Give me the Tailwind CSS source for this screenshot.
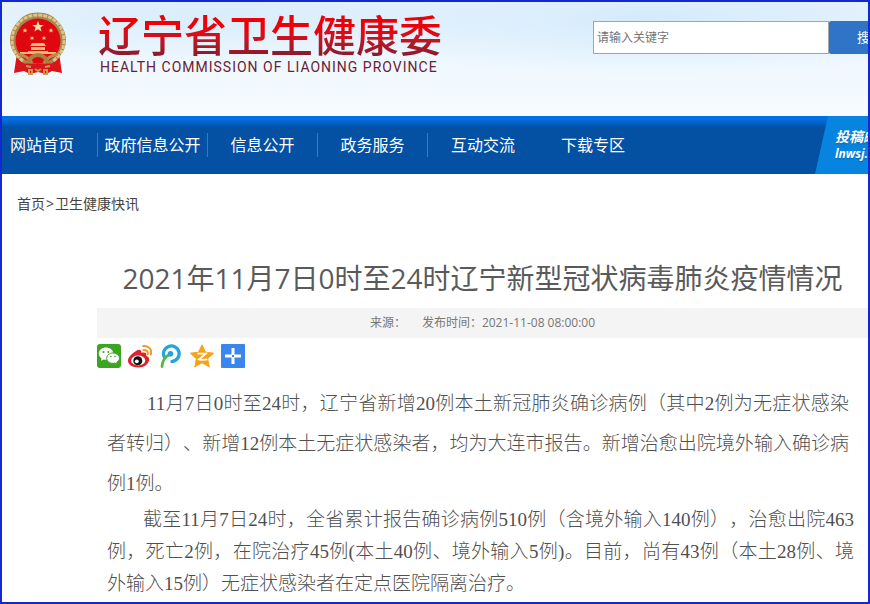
<!DOCTYPE html>
<html lang="zh-CN">
<head>
  <meta charset="UTF-8" />
  <meta name="viewport" content="width=device-width, initial-scale=1.0" />
  <title>辽宁省卫生健康委</title>
  <script src="https://cdn.jsdelivr.net/npm/@tailwindcss/browser@4"></script>
</head>

<body class="min-h-screen overflow-x-hidden border-2 border-[#1428d0] bg-white font-['Open_Sans','Noto_Sans_CJK_SC',sans-serif] text-[#444]">

  <!-- Header -->
  <header class="flex h-[114px] items-start overflow-hidden bg-[#eef7fe] bg-[radial-gradient(ellipse_at_25%_10%,#d8edfc,transparent_35%),radial-gradient(ellipse_at_75%_15%,#d4ebfc,transparent_40%),linear-gradient(#e8f4fd,#f6fbff)]">
    <a href="#" class="flex shrink-0 items-start pt-[10px] pl-[7px]" aria-label="辽宁省卫生健康委">
      <svg class="h-[63px] w-[58px]" viewBox="0 0 58 63">
        <path d="M8 41L5 61l10-2 6 3 8-2 8 2 6-3 10 2-3-20z" fill="#d9141b"/>
        <path d="M29 .5c9 0 15 3 20 9 5 5 8 12 8 19 0 9-6 17-14 23H15C7 45.500 1 37.500 1 28.500c0-7 3-14 8-19C14 3.500 20 .5 29 .5z" fill="#a8854a"/>
        <path d="M14 49C7 44 3 37 3 29 3 14 14 3 29 3s26 11 26 26c0 8-4 15-11 20" fill="none" stroke="#d9c48c" stroke-width="3" stroke-dasharray="4 1"/>
        <circle cx="29" cy="29" r="22.500" fill="#e00810"/>
        <path d="M29 9l1.500 4h4.200l-3.300 2.600 1.200 4-3.600-2.400-3.600 2.400 1.200-4-3.300-2.600h4.200z" fill="#f3e3ac"/>
        <path d="M16 16l.8 1.700h1.800l-1.500 1.100.6 1.800-1.700-1.100-1.700 1.100.6-1.800-1.500-1.100h1.800zM42 16l.8 1.700h1.800l-1.500 1.100.6 1.800-1.700-1.100-1.700 1.100.6-1.800-1.500-1.100h1.800zM23 24l.8 1.500h1.600l-1.300 1 .5 1.600-1.600-1-1.600 1 .5-1.600-1.300-1h1.600zM35 24l.8 1.500h1.600l-1.300 1 .5 1.600-1.600-1-1.600 1 .5-1.600-1.300-1h1.600z" fill="#e8cd85"/>
        <path d="M23 31h12l2 3H21zM22 35h14v3H22zM19 39h20v2H19zM11 40h36v2H11z" fill="#e0bf79"/>
        <path d="M9 42q10 2 14 9M49 42q-10 2-14 9" fill="none" stroke="#b98c48" stroke-width="3"/>
        <path d="M20 51a9 8 0 0 1 18 0" fill="none" stroke="#a8803f" stroke-width="4"/>
        <path d="M17 54l5 1M36 55l5-1M20 58h3v4h-3zM35 58h3v4h-3zM26 57l3 2 3-2" fill="none" stroke="#c79a50" stroke-width="2"/>
      </svg>
      <span class="ml-[31px] block">
        <span class="block bg-linear-to-b from-[#ee0008] from-35% to-[#8b1a2b] to-90% bg-clip-text text-[43px] leading-[48px] font-medium whitespace-nowrap text-transparent">辽宁省卫生健康委</span>
        <span class="ml-[2px] block font-['Roboto',sans-serif] text-[14px] leading-[14px] tracking-[1px] whitespace-nowrap text-[#6b2030]">HEALTH COMMISSION OF LIAONING PROVINCE</span>
      </span>
    </a>

    <form class="mt-[19px] ml-auto flex h-[33px] w-[275px] overflow-hidden">
      <input type="text" aria-label="关键字" placeholder="请输入关键字" class="w-[236px] shrink-0 border border-[#a0a6ac] bg-white px-[3px] text-[12px] placeholder:text-[#757575]" />
      <button type="button" class="shrink-0 rounded-xs bg-[#2f74c5] px-7 text-[13px] whitespace-nowrap text-white">搜索</button>
    </form>
  </header>

  <!-- Main menu -->
  <nav class="flex h-[58px] overflow-hidden bg-linear-to-b from-[#0070e6] from-5% via-[#0450a3] via-20% to-[#0450a3] text-[16px] text-white">
    <ul class="flex items-center whitespace-nowrap">
      <li class="flex h-6 w-24 shrink-0 items-center border-r border-[#2c7ae0] pl-2"><a href="#">网站首页</a></li>
      <li class="flex h-6 w-[110px] shrink-0 items-center justify-center border-r border-[#2c7ae0]"><a href="#">政府信息公开</a></li>
      <li class="flex h-6 w-[110px] shrink-0 items-center justify-center border-r border-[#2c7ae0]"><a href="#">信息公开</a></li>
      <li class="flex h-6 w-[110px] shrink-0 items-center justify-center border-r border-[#2c7ae0]"><a href="#">政务服务</a></li>
      <li class="flex h-6 w-[110px] shrink-0 items-center justify-center"><a href="#">互动交流</a></li>
      <li class="flex h-6 w-[110px] shrink-0 items-center justify-center"><a href="#">下载专区</a></li>
    </ul>
    <a href="#" class="ml-auto block w-[53px] overflow-hidden bg-[#0784e0] pt-3 pl-5 text-[14px] leading-[17px] font-bold whitespace-nowrap italic [clip-path:polygon(13px_0,100%_0,100%_100%,0_100%)] text-shadow-sm">
      <span class="block">投稿邮箱</span>
      <span class="block text-[12px]">lnwsj.</span>
    </a>
  </nav>

  <main>
    <p class="mt-[19px] ml-[15px] text-[14px] leading-[22px]"><a href="#">首页</a><span class="px-px">&gt;</span><a href="#">卫生健康快讯</a></p>

    <article class="ml-[95px]">
      <h1 class="mt-[43px] text-center text-[28px] leading-[40px] text-[#5a5a5a]">2021年11月7日0时至24时辽宁新型冠状病毒肺炎疫情情况</h1>

      <div class="mt-[10px] flex h-[30px] items-center justify-center gap-4 bg-[#f4f4f4] text-[12px] text-[#777]">
        <span>来源：</span>
        <span>发布时间：2021-11-08 08:00:00</span>
      </div>

      <!-- Share buttons -->
      <div class="mt-[6px] flex gap-[7px]">
        <button type="button" aria-label="微信">
          <svg class="size-6" viewBox="0 0 24 24">
            <rect width="24" height="24" rx="3" fill="#3ba521"/>
            <path d="M9 3.500c-4 0-7.200 2.600-7.200 6 0 2 1 3.600 2.700 4.700L4 16.800l2.800-1.400c.8.200 1.400.3 2.200.3 4 0 7.200-2.700 7.200-6.200S13 3.500 9 3.500z" fill="#fff"/>
            <path d="M16 9c-3.600 0-6.300 2.300-6.300 5.200s2.700 5.200 6.300 5.200c.7 0 1.400-.1 2-.3l2.300 1.200-.6-2c1.500-1 2.800-2.400 2.800-4.100C22.500 11.300 19.500 9 16 9z" fill="#fff" stroke="#3ba521" stroke-width="1"/>
            <g fill="#3ba521"><circle cx="6.500" cy="8" r="1"/><circle cx="11.300" cy="8" r="1"/><circle cx="13.900" cy="12.500" r=".8"/><circle cx="18" cy="12.500" r=".8"/></g>
          </svg>
        </button>
        <button type="button" aria-label="微博">
          <svg class="size-6" viewBox="0 0 24 24">
            <path d="M8 7C11 4.500 14 6 13.300 9c3-1.200 5.800-.2 4.800 2.700 2.300.7 3.400 2.300 3 4.300-.7 4.500-5.100 7.500-10.600 7.500S0 21 0 16.800C0 13 4 9.500 8 7z" fill="#e0202b"/>
            <ellipse cx="10.200" cy="16.500" rx="7" ry="5" fill="#fff"/>
            <circle cx="9.800" cy="16.700" r="4.500" fill="#111"/>
            <circle cx="8.800" cy="17.300" r="1.900" fill="#fff"/>
            <path d="M15.500 6c2.800-.5 4.800 1.600 4.100 4.200M15.300 2c5.300-.8 9 3.500 7.500 8.500" fill="none" stroke="#f39a26" stroke-width="2" stroke-linecap="round"/>
          </svg>
        </button>
        <button type="button" aria-label="腾讯微博">
          <svg class="size-6" viewBox="0 0 24 24">
            <path d="M5.500 13.500A7.800 7.800 0 1 1 13 17.500" fill="none" stroke="#23a5dc" stroke-width="3.300" stroke-linecap="round"/>
            <path d="M3 22.500C3.500 17 6 12.500 10.500 10.500" fill="none" stroke="#55b947" stroke-width="2.800" stroke-linecap="round"/>
            <circle cx="11.500" cy="9.800" r="2.800" fill="#23a5dc"/>
          </svg>
        </button>
        <button type="button" aria-label="QQ空间">
          <svg class="size-6" viewBox="0 0 24 24">
            <path d="M12 .8l3.500 7.400 8.100 1-6 5.500 1.600 8.100-7.200-4-7.200 4 1.600-8.100-6-5.500 8.100-1z" fill="#f7a21b" stroke="#f7a21b" stroke-width="1" stroke-linejoin="round"/>
            <path d="M7.500 9.600h8.300L9 15.300c3 .7 5.500.7 8.300.1" fill="none" stroke="#fff" stroke-width="1.800"/>
          </svg>
        </button>
        <button type="button" aria-label="更多">
          <svg class="size-6" viewBox="0 0 24 24">
            <rect width="24" height="24" rx="1" fill="#3b86ec"/>
            <path d="M12 4v7M12 13v7M4 12h7M13 12h7" stroke="#fff" stroke-width="3"/>
          </svg>
        </button>
      </div>

      <div class="mr-[14px] ml-[10px] pt-4 text-justify font-['Liberation_Serif','Noto_Sans_CJK_SC',serif] text-[19px] font-light text-[#505050] [text-spacing-trim:space-all]">
        <p class="mr-[5px] indent-10 leading-[40px]">11月7日0时至24时，辽宁省新增20例本土新冠肺炎确诊病例（其中2例为无症状感染者转归）、新增12例本土无症状感染者，均为大连市报告。新增治愈出院境外输入确诊病例1例。</p>
        <p class="indent-9 leading-[32px]">截至11月7日24时，全省累计报告确诊病例510例（含境外输入140例），治愈出院463例，死亡2例，在院治疗45例(本土40例、境外输入5例)。目前，尚有43例（本土28例、境外输入15例）无症状感染者在定点医院隔离治疗。</p>
      </div>
    </article>
  </main>

</body>
</html>
